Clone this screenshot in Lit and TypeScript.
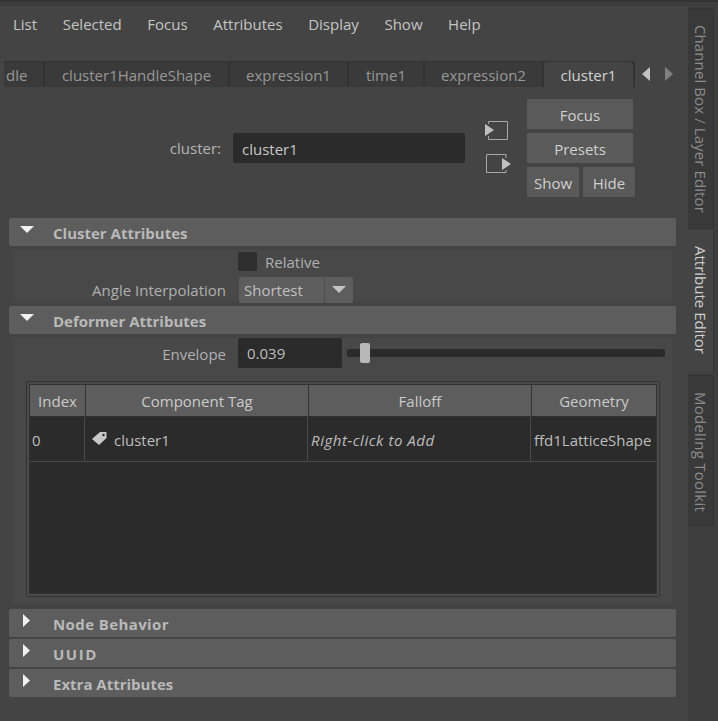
import { LitElement, html, css } from "lit";
import { customElement } from "lit/decorators.js";

const MENU = ["List", "Selected", "Focus", "Attributes", "Display", "Show", "Help"];
const TABS: [string, number][] = [
  ["cluster1HandleShape", 183],
  ["expression1", 117],
  ["time1", 74],
  ["expression2", 117],
];

@customElement("app-root")
export class AppRoot extends LitElement {
  static styles = css`
    :host { display: block; width: 718px; height: 721px; overflow: hidden; background: #444; color: #bdbdbd;
      font-family: "Open Sans", "Noto Sans", sans-serif; font-size: 15px; line-height: 20px; }
    * { box-sizing: border-box; }
    .top { height: 6px; background: #3d3d3d; border-top: 2px solid #333; }
    .frame { display: flex; height: 715px; }
    .main { width: 688px; flex: none; padding-top: 8px; }
    .menu { display: flex; height: 20px; padding-left: 13px; gap: 25.600px; color: #c4c4c4; }
    .tabs { display: flex; align-items: flex-end; margin: 27px 0 0 4px; height: 26px; }
    .tabstrip { display: flex; gap: 2px; width: 631px; height: 26px; background: #333; padding-top: 1px; }
    .tab { height: 25px; background: #3a3a3a; border-radius: 3px 3px 0 0; color: #989898; text-align: center; line-height: 26px; flex: none; }
    .tab.clip { width: 39px; text-align: left; padding-left: 2px; }
    .tab.on { background: #444; color: #d2d2d2; width: 89px; }
    .arrows { display: flex; gap: 15px; margin: 0 0 6px 7px; }
    .name { display: flex; margin-top: 12px; height: 98px; }
    .lab { width: 221px; padding-top: 39px; text-align: right; color: #b4b4b4; }
    .nameinput { width: 232px; height: 30px; margin: 34px 0 0 12px; background: #2b2b2b; border-radius: 2px; color: #c8c8c8; padding: 6px 9px; }
    .swap { display: flex; flex-direction: column; width: 42px; margin: 20px 0 0 20px; gap: 11px; }
    .btns { display: grid; grid-template-columns: 52px 52px; grid-auto-rows: 30px; column-gap: 4px; row-gap: 4px; width: 108px; }
    .btn { height: 30px; background: #5a5a5a; color: #d0d0d0; text-align: center; line-height: 32px; border-radius: 1px; }
    .btn.wide { grid-column: 1 / 3; width: 106px; }
    .sec { display: flex; width: 667px; height: 28px; margin-left: 9px; background: #5d5d5d; border-radius: 2px; align-items: center; font-weight: 700; color: #b9b9b9; }
    .sec svg { margin-left: 11px; flex: none; align-self: flex-start; margin-top: 8px; }
    .sec span { margin-left: 19px; padding-top: 2px; }
    .sec.closed svg { margin-left: 14px; margin-top: 5px; }
    .sec.closed span { margin-left: 22px; }
    .sec.node span { letter-spacing: 0.400px; }
    .sec.uuid span { letter-spacing: 1.500px; }
    .sec.first { margin-top: 21px; }
    .gap2 { margin-top: 2px; }
    .body { width: 659px; margin: 4px 0 5px 13px; background: #484848; }
    .b1 { height: 51px; }
    .row { display: flex; align-items: center; }
    .rel { height: 22px; padding-left: 225px; gap: 8px; color: #b0b0b0; }
    .rel span { padding-top: 2px; }
    .check { width: 19px; height: 19px; background: #2f2f2f; border-radius: 2px; }
    .angle { height: 26px; margin-top: 5px; }
    .rlabel { width: 213px; text-align: right; color: #b0b0b0; flex: none; padding-top: 1px; }
    .angle .rlabel { padding-top: 0; }
    .combo { display: flex; margin-left: 13px; height: 26px; width: 114px; background: #5d5d5d; border-radius: 2px; line-height: 26px; color: #c0c0c0; padding-left: 5px; justify-content: space-between; }
    .combo i { display: flex; width: 29px; align-items: center; justify-content: center; border-left: 1px solid #4d4d4d; }
    .b2 { height: 266px; }
    .env { height: 30px; }
    .num { width: 104px; height: 30px; margin-left: 12px; background: #2b2b2b; border-radius: 2px; padding: 5px 9px; color: #bdbdbd; flex: none; }
    .track { position: relative; width: 318px; height: 8px; margin-left: 5px; background: #2b2b2b; border-radius: 2px; }
    .thumb { position: absolute; left: 13px; top: -6px; width: 10px; height: 20px; background: #b8b8b8; border-radius: 2px; }
    .table { margin: 13px 0 0 13px; width: 634px; height: 216px; border: 1px solid #333; border-radius: 2px; background: #4a4a4a; padding: 3px; }
    .inner { height: 100%; background: #2b2b2b; outline: 1px solid #333; }
    .hrow { display: grid; grid-template-columns: 55px 223px 223px 125px; height: 32px; background: #5d5d5d; border-bottom: 1px solid #333; }
    .hrow div { text-align: center; line-height: 33px; border-left: 1px solid #333; color: #cacaca; }
    .hrow div:first-child { border-left: 0; }
    .drow { display: grid; grid-template-columns: 54px 223px 223px 126px; height: 45px; border-bottom: 1px solid #4a4a4a; color: #bdbdbd; }
    .drow > div { display: flex; align-items: center; padding: 2px 0 0 3px; border-left: 1px solid #4a4a4a; white-space: nowrap; }
    .drow > div:first-child { border-left: 0; padding-left: 2px; }
    .tag { gap: 7px; padding-left: 7px !important; }
    .tag svg { margin-top: -5px; }
    .it { font-style: italic; letter-spacing: 0.550px; }
    .rail { flex: 1; padding-top: 2px; background: #3e3e3e; }
    .vt { writing-mode: vertical-rl; width: 26px; color: #8c8c8c; display: flex; align-items: flex-start; line-height: 24px; background: #393939; border-radius: 0 3px 3px 0; border: solid #343434; border-width: 1px 1px 1px 0; }
    .vt.a { height: 221px; padding-top: 16px; letter-spacing: 0.100px; }
    .vt.b { height: 143px; margin-top: 1px; background: #444; color: #d0d0d0; padding-top: 16px; border-width: 0 1px 0 0; border-radius: 0; }
    .vt.c { height: 151px; margin-top: 2px; padding-top: 16px; letter-spacing: 0.250px; }
  `;

  private tri(open: boolean) {
    return open
      ? html`<svg width="14" height="8" viewBox="0 0 14 8"><path d="M0 0h14L7 7z" fill="#f0f0f0"/></svg>`
      : html`<svg width="8" height="14" viewBox="0 0 8 14"><path d="M0 0v13l7-6.500z" fill="#f0f0f0"/></svg>`;
  }

  private sec(label: string, open: boolean, cls = "") {
    return html`<div class="sec ${open ? "" : "closed"} ${cls}">${this.tri(open)}<span>${label}</span></div>`;
  }

  render() {
    return html`
      <div class="top"></div>
      <div class="frame">
        <div class="main">
          <div class="menu">${MENU.map((m) => html`<span>${m}</span>`)}</div>
          <div class="tabs">
            <div class="tabstrip">
              <div class="tab clip">dle</div>
              ${TABS.map(([t, w]) => html`<div class="tab" style="width:${w}px">${t}</div>`)}
              <div class="tab on">cluster1</div>
            </div>
            <div class="arrows">
              <svg width="8" height="14" viewBox="0 0 8 14"><path d="M8 0v14L0 7z" fill="#c4c4c4"/></svg>
              <svg width="8" height="14" viewBox="0 0 8 14"><path d="M0 0v14l8-7z" fill="#808080"/></svg>
            </div>
          </div>
          <div class="name">
            <div class="lab">cluster:</div>
            <div class="nameinput">cluster1</div>
            <div class="swap">
              <svg width="26" height="22" viewBox="0 0 26 22"><path d="M3.500 5V2.500h19v18h-19V17" fill="none" stroke="#a8a8a8"/><path d="M0 5v12l9-6z" fill="#c0c0c0"/></svg>
              <svg width="26" height="22" viewBox="0 0 26 22"><path d="M21 6V2.500H1.500v18H21V18" fill="none" stroke="#a8a8a8"/><path d="M17 6v12l9-6z" fill="#c0c0c0"/></svg>
            </div>
            <div class="btns">
              <div class="btn wide">Focus</div>
              <div class="btn wide">Presets</div>
              <div class="btn">Show</div>
              <div class="btn">Hide</div>
            </div>
          </div>
          ${this.sec("Cluster Attributes", true, "first")}
          <div class="body b1">
            <div class="row rel"><div class="check"></div><span>Relative</span></div>
            <div class="row angle">
              <div class="rlabel">Angle Interpolation</div>
              <div class="combo">Shortest<i><svg width="14" height="8" viewBox="0 0 14 8"><path d="M0 0h14L7 7z" fill="#c4c4c4"/></svg></i></div>
            </div>
          </div>
          ${this.sec("Deformer Attributes", true)}
          <div class="body b2">
            <div class="row env">
              <div class="rlabel">Envelope</div>
              <div class="num">0.039</div>
              <div class="track"><div class="thumb"></div></div>
            </div>
            <div class="table">
              <div class="inner">
                <div class="hrow"><div>Index</div><div>Component Tag</div><div>Falloff</div><div>Geometry</div></div>
                <div class="drow">
                  <div>0</div>
                  <div class="tag"><svg width="15" height="14" viewBox="0 0 15 14"><path d="M0 8L8 1h6.500v6L7 14z" fill="#c8c8c8"/><circle cx="11.500" cy="4" r="1.200" fill="#2b2b2b"/></svg>cluster1</div>
                  <div class="it">Right-click to Add</div>
                  <div>ffd1LatticeShape</div>
                </div>
              </div>
            </div>
          </div>
          ${this.sec("Node Behavior", false, "node")}
          ${this.sec("UUID", false, "gap2 uuid")}
          ${this.sec("Extra Attributes", false, "gap2")}
        </div>
        <div class="rail">
          <div class="vt a">Channel Box / Layer Editor</div>
          <div class="vt b">Attribute Editor</div>
          <div class="vt c">Modeling Toolkit</div>
        </div>
      </div>
    `;
  }
}
